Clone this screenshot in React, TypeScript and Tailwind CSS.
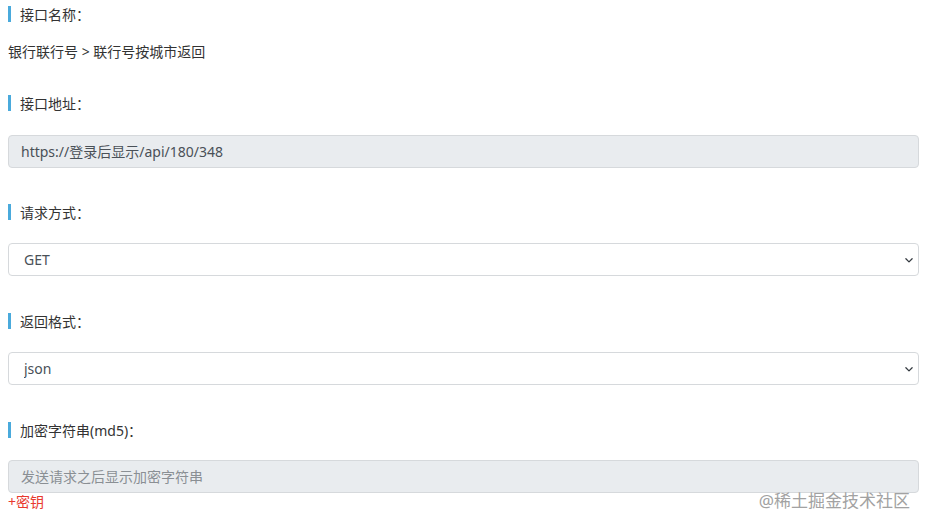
function Label({ text }: { text: string }) {
  return (
    <div className="flex h-5 items-center">
      <span className="h-4 w-[3px] bg-[#4aaadc]" />
      <span className="ml-[9px] text-[14px] text-[#333]">{text}</span>
    </div>
  );
}

function Chevron() {
  return (
    <svg
      className="pointer-events-none absolute right-[5px] top-1/2 -translate-y-1/2"
      width="10"
      height="10"
      viewBox="0 0 16 16"
      fill="none"
    >
      <path d="M3 6l5 5 5-5" stroke="#343a40" strokeWidth="2" strokeLinecap="round" strokeLinejoin="round" />
    </svg>
  );
}

function SelectBox({ value }: { value: string }) {
  return (
    <div className="relative mt-[21px]">
      <select
        defaultValue={value}
        className="h-[33px] w-full appearance-none rounded-[4px] border border-[#d6d9dc] bg-white pl-[15px] text-[14px] text-[#495057] outline-none"
      >
        <option>{value}</option>
      </select>
      <Chevron />
    </div>
  );
}

export default function App() {
  return (
    <div
      className="relative h-[525px] w-[927px] overflow-hidden bg-white px-2 pt-1"
      style={{ fontFamily: '"Noto Sans", "Noto Sans CJK SC", sans-serif' }}
    >
      <Label text="接口名称：" />
      <div className="mt-[18px] h-5 text-[14px] leading-5 text-[#333]">银行联行号 &gt; 联行号按城市返回</div>

      <div className="mt-[31px]">
        <Label text="接口地址：" />
        <div className="mt-[22px] flex h-[33px] items-center rounded-[4px] border border-[#d6d9dc] bg-[#e9ecef] px-3 text-[14px] text-[#495057]">
          https://登录后显示/api/180/348
        </div>
      </div>

      <div className="mt-[34px]">
        <Label text="请求方式：" />
        <SelectBox value="GET" />
      </div>

      <div className="mt-[35px]">
        <Label text="返回格式：" />
        <SelectBox value="json" />
      </div>

      <div className="mt-[35px]">
        <Label text="加密字符串(md5)：" />
        <div className="mt-[20px] flex h-[33px] items-center rounded-[4px] border border-[#d6d9dc] bg-[#e9ecef] px-3 text-[14px] text-[#8a8f94]">
          发送请求之后显示加密字符串
        </div>
        <div className="mt-[1px] text-[14px] leading-4 text-[#e8392f]">+密钥</div>
      </div>

      <div className="absolute bottom-[14px] right-[17px] text-[17px] leading-5 text-[#a2a2a2]">@稀土掘金技术社区</div>
    </div>
  );
}
